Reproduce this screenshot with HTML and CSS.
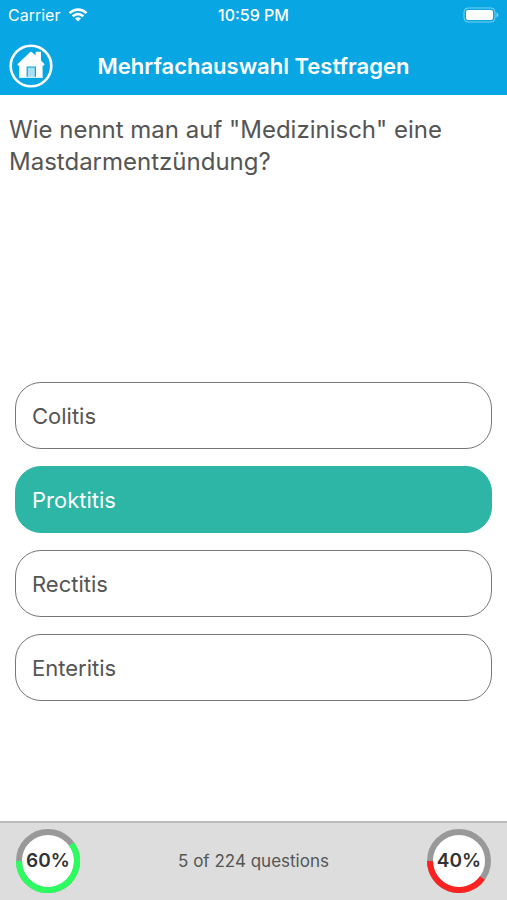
FILE: index.html
```html
<!DOCTYPE html>
<html lang="de">
<head>
<meta charset="utf-8">
<meta name="viewport" content="width=device-width, initial-scale=1">
<title>Mehrfachauswahl Testfragen</title>
<link rel="stylesheet" href="styles.css">
</head>
<body>
<header class="top">
  <div class="status">
    <div class="carrier">
      <span>Carrier</span>
      <svg width="20" height="14" viewBox="0 0 20 14" fill="#fff" aria-hidden="true">
        <path d="M0.6 4.2C6-1.2 14-1.2 19.4 4.2L17.5 6.1C13.2 1.9 6.8 1.9 2.5 6.1Z"/>
        <path d="M3.8 7.4C7.4 3.8 12.6 3.8 16.2 7.4L14.3 9.3C11.8 6.8 8.2 6.8 5.7 9.3Z"/>
        <path d="M7 10.6C8.8 8.9 11.2 8.9 13 10.6L10 13.6Z"/>
      </svg>
    </div>
    <time class="clock">10:59 PM</time>
    <svg class="battery" width="36" height="16" viewBox="0 0 36 16" aria-hidden="true">
      <rect x="1" y="1" width="31" height="14" rx="4" fill="none" stroke="#fff" stroke-opacity=".45"/>
      <rect x="3" y="3" width="27" height="10" rx="2" fill="#fff"/>
      <path d="M33.5 5.5C36 6.4 36 9.6 33.5 10.5Z" fill="#fff" fill-opacity=".5"/>
    </svg>
  </div>
  <nav class="bar">
    <button class="home" type="button" aria-label="Home">
      <svg width="44" height="44" viewBox="0 0 44 44" aria-hidden="true">
        <circle cx="22" cy="22" r="20.3" fill="none" stroke="#fff" stroke-width="2.6"/>
        <path fill="#fff" d="M8.4 20.2L21 8.2Q22 7.4 23 8.2L26.6 11.6V7.8H32V16.6L35.6 20.2Q35 22 33.6 21.6V33H27V22.4H17.6V33H10.2V21.6Q9 22 8.4 20.2Z"/>
        <path fill="#fff" fill-opacity=".65" d="M18.8 23.6H25.8V33H18.8Z"/>
        <path stroke="#fff" d="M10 33.3H34"/>
      </svg>
    </button>
    <h1 class="title">Mehrfachauswahl Testfragen</h1>
  </nav>
</header>
<main class="quiz">
  <p class="question">Wie nennt man auf "Medizinisch" eine Mastdarmentzündung?</p>
  <div class="options">
    <button class="option" type="button">Colitis</button>
    <button class="option selected" type="button" aria-pressed="true">Proktitis</button>
    <button class="option" type="button">Rectitis</button>
    <button class="option" type="button">Enteritis</button>
  </div>
</main>
<footer class="footer">
  <div class="ring">
    <svg width="64" height="64" viewBox="0 0 64 64" fill="none" stroke-width="6" aria-hidden="true">
      <circle cx="32" cy="32" r="29" fill="#fff" stroke="#999"/>
      <path d="M3 32A29 29 0 1 0 55.46 14.95" stroke="#2dfc60"/>
    </svg>
    <span class="percent">60%</span>
  </div>
  <p class="progress">5 of 224 questions</p>
  <div class="ring">
    <svg width="64" height="64" viewBox="0 0 64 64" fill="none" stroke-width="6" aria-hidden="true">
      <circle cx="32" cy="32" r="29" fill="#fff" stroke="#999"/>
      <path d="M3 32A29 29 0 0 0 55.46 49.05" stroke="#fc2222"/>
    </svg>
    <span class="percent">40%</span>
  </div>
</footer>
</body>
</html>
```
FILE: styles.css
```css
* {
  box-sizing: border-box;
}

body {
  margin: 0;
  min-height: 100vh;
  display: flex;
  flex-direction: column;
  background: #fff;
  color: #555;
  font-family: Inter, "Liberation Sans", sans-serif;
}

button {
  font: inherit;
  color: inherit;
  cursor: pointer;
}

.top {
  background: #08a6e3;
  color: #fff;
}

.status {
  display: grid;
  grid-template-columns: 1fr auto 1fr;
  align-items: center;
  height: 30px;
  padding: 0 8px;
  font-size: 16px;
}

.carrier {
  display: flex;
  align-items: center;
  gap: 8px;
}

.clock {
  font-size: 16px;
  font-weight: 500;
}

.battery {
  justify-self: end;
}

.bar {
  display: grid;
  grid-template-columns: 44px 1fr 44px;
  align-items: center;
  padding: 14px 9px 7px;
}

.home {
  display: flex;
  padding: 0;
  border: 0;
  background: none;
}

.title {
  margin: 0;
  font-size: 22px;
  font-weight: 600;
  text-align: center;
}

.quiz {
  flex: 1;
  display: flex;
  flex-direction: column;
  padding: 19px 9px;
}

.question {
  margin: 0;
  min-height: 268px;
  font-size: 24px;
  line-height: 32px;
}

.options {
  display: grid;
  gap: 17px;
  padding: 0 6px;
}

.option {
  height: 67px;
  padding: 0 16px;
  border: 1px solid #777;
  border-radius: 26px;
  background: #fff;
  font-size: 22px;
  text-align: left;
}

.selected {
  border-color: #2db5a5;
  background: #2db5a5;
  color: #fff;
}

.footer {
  display: flex;
  align-items: center;
  justify-content: space-between;
  height: 79px;
  padding: 0 16px 2px;
  border-top: 2px solid #bbb;
  background: #ddd;
}

.ring {
  display: grid;
  place-items: center;
}

.ring > * {
  grid-area: 1 / 1;
}

.percent {
  color: #333;
  font-size: 19px;
  font-weight: 600;
}

.progress {
  margin: 0;
  font-size: 17px;
}
```
